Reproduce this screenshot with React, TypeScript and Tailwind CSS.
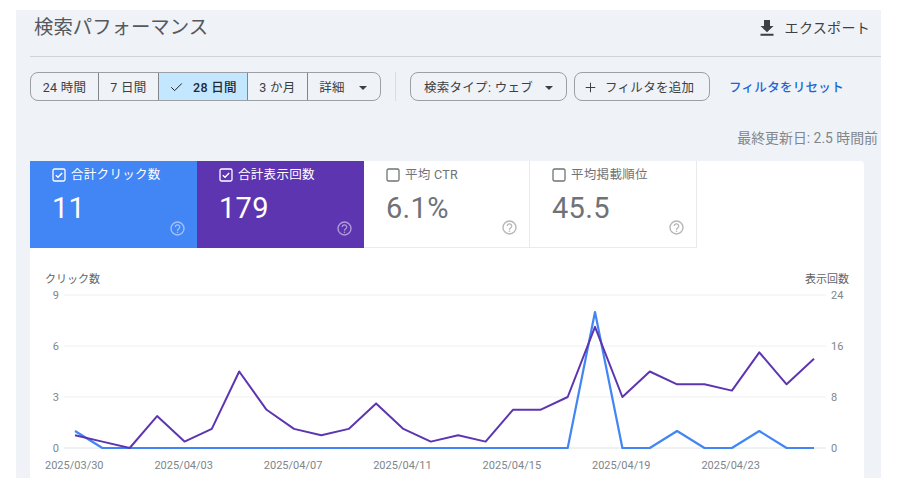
import { Check, Plus } from 'lucide-react'

const IMPRESSIONS = [2, 1, 0, 5, 1, 3, 12, 6, 3, 2, 3, 7, 3, 1, 2, 1, 6, 6, 8, 19, 8, 12, 10, 10, 9, 15, 10, 14]
const CLICKS = [1, 0, 0, 0, 0, 0, 0, 0, 0, 0, 0, 0, 0, 0, 0, 0, 0, 0, 0, 8, 0, 0, 1, 0, 0, 1, 0, 0]

const LEFT_TICKS = ['0', '3', '6', '9']
const RIGHT_TICKS = ['0', '8', '16', '24']
const DATES = ['2025/03/30', '2025/04/03', '2025/04/07', '2025/04/11', '2025/04/15', '2025/04/19', '2025/04/23']

// chart origin is the card's top-left corner
const X0 = 45
const STEP = 27.37
const BASE = 287
const PLOT_H = 153

function toPoints(values: number[], max: number) {
  return values.map((v, i) => `${(X0 + i * STEP).toFixed(1)},${(BASE - (v / max) * PLOT_H).toFixed(1)}`).join(' ')
}

function CheckBox({ checked }: { checked: boolean }) {
  return (
    <svg width="14" height="14" viewBox="0 0 14 14" fill="none" stroke="currentColor" className="shrink-0">
      <rect x="1" y="1" width="12" height="12" rx="1.5" strokeWidth="1.3" />
      {checked && <path d="M3.800 7.200 6 9.300l4.200-4.400" strokeWidth="1.400" />}
    </svg>
  )
}

function HelpIcon() {
  return (
    <svg width="15" height="15" viewBox="0 0 15 15" fill="none" stroke="currentColor" className="absolute right-[12px] bottom-[12px] opacity-50">
      <circle cx="7.500" cy="7.500" r="6.500" strokeWidth="1.400" />
      <path d="M5.300 6a2.200 2.200 0 1 1 3.500 1.800c-.8.500-1.300 1-1.300 1.900" strokeWidth="1.300" />
      <circle cx="7.500" cy="11.300" r=".8" fill="currentColor" stroke="none" />
    </svg>
  )
}

function Tile({ label, value, checked, tone }: { label: string; value: string; checked: boolean; tone: string }) {
  return (
    <div className={`relative h-[87px] pl-[22px] pt-[6px] ${tone}`}>
      <div className="flex items-center gap-[5px] text-[12.5px] leading-[16px] tracking-[0.3px]">
        <CheckBox checked={checked} />
        <span>{label}</span>
      </div>
      <div className="mt-[7px] text-[29px] leading-[36px] tracking-[0.3px]">{value}</div>
      <HelpIcon />
    </div>
  )
}

function Segment({ children, className = '' }: { children: React.ReactNode; className?: string }) {
  return <div className={`h-full flex items-center justify-center border-r border-[#80868b] ${className}`}>{children}</div>
}

function Caret() {
  return <span className="w-0 h-0 border-x-[4px] border-x-transparent border-t-[4px] border-t-[#3c4043]" />
}

export default function App() {
  return (
    <div className="w-[900px] h-[491px] bg-white overflow-hidden font-['Roboto','Noto_Sans_CJK_JP',sans-serif] text-[#3c4043]">
      <div className="ml-4 mt-[10px] w-[865px] h-[468px] bg-[#eff2f7] pl-[14px] flex flex-col">
        {/* header */}
        <div className="h-[47px] flex items-start justify-between border-b border-[#cfd2d6]">
          <h1 className="ml-1 mt-[4px] text-[19.4px] leading-[28px] font-normal text-[#55585c]">検索パフォーマンス</h1>
          <div className="flex items-center mt-[8px] mr-[11px] text-[14px] leading-[20px] tracking-[0.3px]">
            <svg width="16" height="18" viewBox="0 0 16 18" fill="#3c4043" className="mr-[10px]">
              <path d="M5 1h6v6h3.500L8 13.200 1.500 7H5zM1.500 14.800h13v2h-13z" />
            </svg>
            エクスポート
          </div>
        </div>

        {/* filters */}
        <div className="mt-[15px] h-[29px] flex items-center text-[12.5px] leading-[16px] tracking-[0.3px]">
          <div className="w-[351px] h-full flex border border-[#9aa0a6] rounded-[8px] overflow-hidden pt-0">
            <Segment className="w-[68px] pt-[2px]">24 時間</Segment>
            <Segment className="w-[60px] pt-[2px]">7 日間</Segment>
            <Segment className="w-[89px] pt-[2px] bg-[#c2e7ff] gap-[9px] font-medium">
              <Check size={15} strokeWidth={1.6} className="text-[#202124]" />
              <span className="text-[#1f2937]">28 日間</span>
            </Segment>
            <Segment className="w-[60px] pt-[2px]">3 か月</Segment>
            <div className="flex-1 flex items-center justify-center gap-[14px] pr-[2px] pt-[2px]">
              詳細
              <Caret />
            </div>
          </div>
          <div className="ml-[14px] w-px h-full bg-[#d9dce0]" />
          <div className="ml-[14px] w-[157px] h-full flex items-center justify-center gap-[12px] border border-[#9aa0a6] rounded-[8px] pt-[2px]">
            検索タイプ: ウェブ
            <Caret />
          </div>
          <div className="ml-[7px] w-[136px] h-full flex items-center pl-[8px] gap-[7px] border border-[#9aa0a6] rounded-[8px] pt-[2px]">
            <Plus size={15} strokeWidth={1.6} />
            フィルタを追加
          </div>
          <div className="ml-[19px] pt-[2px] text-[#1a67d2] font-medium">フィルタをリセット</div>
        </div>

        <div className="mt-[28px] mr-[3px] text-right text-[13.9px] leading-[18px] text-[#80868b]">最終更新日: 2.5 時間前</div>

        {/* metrics + chart */}
        <div className="mt-[14px] w-[834px] flex-1 bg-white rounded-tr-[4px] overflow-hidden">
          <div className="flex">
            <div className="w-[167px]"><Tile label="合計クリック数" value="11" checked tone="bg-[#4285f4] text-white" /></div>
            <div className="w-[167px]"><Tile label="合計表示回数" value="179" checked tone="bg-[#5e35b1] text-white" /></div>
            <div className="w-[166px]"><Tile label="平均 CTR" value="6.1%" checked={false} tone="border-r border-b border-[#e8eaed] text-[#6f7276]" /></div>
            <div className="w-[167px]"><Tile label="平均掲載順位" value="45.5" checked={false} tone="border-r border-b border-[#e8eaed] text-[#6f7276]" /></div>
          </div>
          <svg width="834" height="230" viewBox="0 87 834 230" className="block" fontSize="11" fill="#80868b">
            <text x="15" y="122" fill="#5f6368">クリック数</text>
            <text x="819" y="122" fill="#5f6368" textAnchor="end">表示回数</text>
            {LEFT_TICKS.map((t, i) => (
              <g key={t}>
                <line x1="34" x2="796" y1={BASE - i * 51} y2={BASE - i * 51} stroke={i === 0 ? '#e0e2e5' : '#eeeff1'} strokeWidth="1" />
                <text x="29" y={BASE - i * 51 + 4} textAnchor="end">{t}</text>
                <text x="801" y={BASE - i * 51 + 4}>{RIGHT_TICKS[i]}</text>
              </g>
            ))}
            {DATES.map((d, i) => (
              <text key={d} x={15 + i * 109.4} y="308">{d}</text>
            ))}
            <polyline points={toPoints(CLICKS, 9)} fill="none" stroke="#4285f4" strokeWidth="2.200" strokeLinejoin="round" />
            <polyline points={toPoints(IMPRESSIONS, 24)} fill="none" stroke="#5e35b1" strokeWidth="2" strokeLinejoin="round" />
          </svg>
        </div>
      </div>
    </div>
  )
}
